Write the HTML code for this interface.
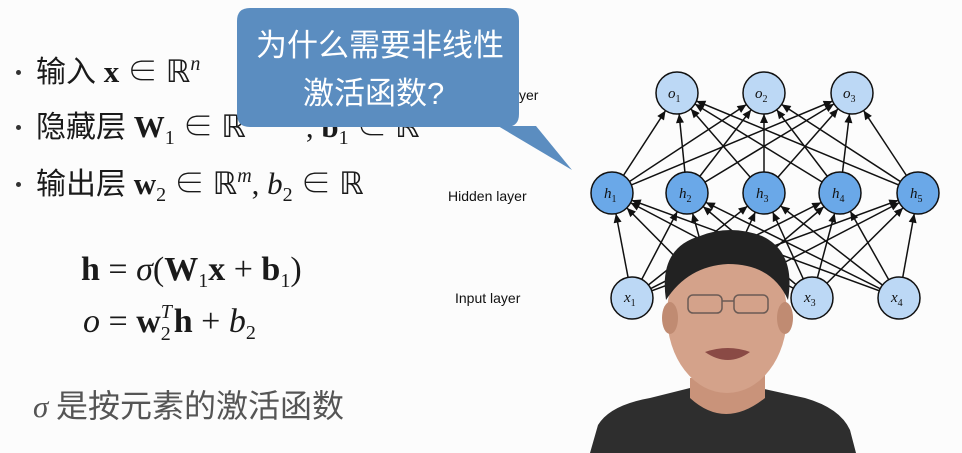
<!DOCTYPE html>
<html><head><meta charset="utf-8"><style>
body{margin:0;width:962px;height:453px;overflow:hidden;background:#fcfcfc;font-family:"Liberation Serif","Noto Serif CJK SC",serif;}
svg{position:absolute;left:0;top:0}
.cn{font-family:"Liberation Sans","Noto Sans CJK SC",sans-serif;}
.l{position:absolute;white-space:nowrap;color:#1a1a1a;font-size:31px;line-height:40px}
.l b{font-weight:bold}
.l sub{font-size:20px;vertical-align:-7px;line-height:0}
.l sup{font-size:20px;vertical-align:12px;line-height:0;font-style:italic}
.dot{position:absolute;width:5px;height:5px;border-radius:50%;background:#333}
.c{font-family:"Liberation Sans","Noto Sans CJK SC",sans-serif;font-size:30px}
i{font-style:italic}
</style></head><body>
<div class="dot" style="left:16px;top:70px"></div>
<div class="dot" style="left:16px;top:125px"></div>
<div class="dot" style="left:16px;top:182px"></div>
<div class="l" style="left:36px;top:52px"><span class="c">输入</span> <b>x</b> ∈ ℝ<sup>n</sup></div>
<div class="l" style="left:36px;top:107px"><span class="c">隐藏层</span> <b>W</b><sub>1</sub> ∈ ℝ<span style="display:inline-block;width:60px"></span>, <b>b</b><sub>1</sub> ∈ ℝ</div>
<div class="l" style="left:36px;top:164px"><span class="c">输出层</span> <b>w</b><sub>2</sub> ∈ ℝ<sup>m</sup>, <i>b</i><sub>2</sub> ∈ ℝ</div>
<div class="l" style="left:81px;top:250px;font-size:34px"><b>h</b> = <i>σ</i>(<b>W</b><sub>1</sub><b>x</b> + <b>b</b><sub>1</sub>)</div>
<div class="l" style="left:83px;top:302px;font-size:34px"><i>o</i> = <b>w</b><span style="display:inline-block;position:relative;width:13px;height:10px"><span style="position:absolute;left:0;top:-20px;font-size:20px;font-style:italic;line-height:20px">T</span><span style="position:absolute;left:0;top:2px;font-size:20px;line-height:20px">2</span></span><b>h</b> + <i>b</i><sub>2</sub></div>
<div class="l" style="left:33px;top:386px;color:#555"><i>σ</i> <span class="c" style="font-size:32px">是按元素的激活函数</span></div>
<svg width="962" height="453" viewBox="0 0 962 453">
<defs>
<marker id="a" markerUnits="userSpaceOnUse" markerWidth="80" markerHeight="20" refX="40" refY="10" orient="auto" viewBox="0 0 80 20">
<path d="M10,6 L19,10 L10,14 Z" fill="#111"/>
</marker>
</defs>
<g class="cn" font-size="14" fill="#111">
<text x="448" y="201">Hidden layer</text>
<text x="455" y="303">Input layer</text>
<text x="519" y="100">yer</text>
</g>
<g stroke="#111" stroke-width="1.5" marker-end="url(#a)">
<line x1="612" y1="193" x2="677" y2="93"/><line x1="612" y1="193" x2="764" y2="93"/><line x1="612" y1="193" x2="852" y2="93"/>
<line x1="687" y1="193" x2="677" y2="93"/><line x1="687" y1="193" x2="764" y2="93"/><line x1="687" y1="193" x2="852" y2="93"/>
<line x1="764" y1="193" x2="677" y2="93"/><line x1="764" y1="193" x2="764" y2="93"/><line x1="764" y1="193" x2="852" y2="93"/>
<line x1="840" y1="193" x2="677" y2="93"/><line x1="840" y1="193" x2="764" y2="93"/><line x1="840" y1="193" x2="852" y2="93"/>
<line x1="918" y1="193" x2="677" y2="93"/><line x1="918" y1="193" x2="764" y2="93"/><line x1="918" y1="193" x2="852" y2="93"/>
<line x1="632" y1="298" x2="612" y2="193"/><line x1="632" y1="298" x2="687" y2="193"/><line x1="632" y1="298" x2="764" y2="193"/><line x1="632" y1="298" x2="840" y2="193"/><line x1="632" y1="298" x2="918" y2="193"/>
<line x1="716" y1="298" x2="612" y2="193"/><line x1="716" y1="298" x2="687" y2="193"/><line x1="716" y1="298" x2="764" y2="193"/><line x1="716" y1="298" x2="840" y2="193"/><line x1="716" y1="298" x2="918" y2="193"/>
<line x1="812" y1="298" x2="612" y2="193"/><line x1="812" y1="298" x2="687" y2="193"/><line x1="812" y1="298" x2="764" y2="193"/><line x1="812" y1="298" x2="840" y2="193"/><line x1="812" y1="298" x2="918" y2="193"/>
<line x1="899" y1="298" x2="612" y2="193"/><line x1="899" y1="298" x2="687" y2="193"/><line x1="899" y1="298" x2="764" y2="193"/><line x1="899" y1="298" x2="840" y2="193"/><line x1="899" y1="298" x2="918" y2="193"/>
</g>
<g stroke="#111" stroke-width="1.5">
<g fill="#bcd8f5"><circle cx="677" cy="93" r="21"/><circle cx="764" cy="93" r="21"/><circle cx="852" cy="93" r="21"/>
<circle cx="632" cy="298" r="21"/><circle cx="716" cy="298" r="21"/><circle cx="812" cy="298" r="21"/><circle cx="899" cy="298" r="21"/></g>
<g fill="#6aa8e8"><circle cx="612" cy="193" r="21"/><circle cx="687" cy="193" r="21"/><circle cx="764" cy="193" r="21"/><circle cx="840" cy="193" r="21"/><circle cx="918" cy="193" r="21"/></g>
</g>
<g font-size="15" font-style="italic" fill="#111">
<text x="668" y="98">o<tspan font-size="10" font-style="normal" dy="4">1</tspan></text>
<text x="755" y="98">o<tspan font-size="10" font-style="normal" dy="4">2</tspan></text>
<text x="843" y="98">o<tspan font-size="10" font-style="normal" dy="4">3</tspan></text>
<text x="604" y="198">h<tspan font-size="10" font-style="normal" dy="4">1</tspan></text>
<text x="679" y="198">h<tspan font-size="10" font-style="normal" dy="4">2</tspan></text>
<text x="756" y="198">h<tspan font-size="10" font-style="normal" dy="4">3</tspan></text>
<text x="832" y="198">h<tspan font-size="10" font-style="normal" dy="4">4</tspan></text>
<text x="910" y="198">h<tspan font-size="10" font-style="normal" dy="4">5</tspan></text>
<text x="624" y="302">x<tspan font-size="10" font-style="normal" dy="4">1</tspan></text>
<text x="804" y="302">x<tspan font-size="10" font-style="normal" dy="4">3</tspan></text>
<text x="891" y="302">x<tspan font-size="10" font-style="normal" dy="4">4</tspan></text>
</g>
<path d="M590,453 L598,425 Q610,405 650,398 L690,388 L760,388 L805,398 Q840,408 850,430 L856,453 Z" fill="#2e2e2e"/>
<path d="M690,378 L690,398 Q725,430 765,398 L765,373 Z" fill="#c9937a"/>
<ellipse cx="727" cy="315" rx="60" ry="78" fill="#d4a28a"/>
<ellipse cx="670" cy="318" rx="8" ry="16" fill="#c08b72"/>
<ellipse cx="785" cy="318" rx="8" ry="16" fill="#c08b72"/>
<path d="M666,300 Q658,248 700,236 Q730,224 762,236 Q796,252 788,300 Q772,264 728,264 Q688,266 666,300 Z" fill="#222"/>
<g fill="none" stroke="#6b5b55" stroke-width="1.5"><rect x="688" y="295" width="34" height="18" rx="5"/><rect x="734" y="295" width="34" height="18" rx="5"/><line x1="722" y1="301" x2="734" y2="301"/></g>
<path d="M705,352 Q728,344 750,352 Q728,368 705,352 Z" fill="#8a4a45"/>
<path d="M250,8 L506,8 Q519,8 519,21 L519,114 Q519,127 506,127 L250,127 Q237,127 237,114 L237,21 Q237,8 250,8 Z" fill="#5b8dc0"/>
<path d="M498,126 L572,170 L536,126 Z" fill="#5b8dc0"/>
<g class="cn" fill="#fff" font-size="31">
<text x="256" y="56">为什么需要非线性</text>
<text x="303" y="104">激活函数?</text>
</g>
</svg>
</body></html>
